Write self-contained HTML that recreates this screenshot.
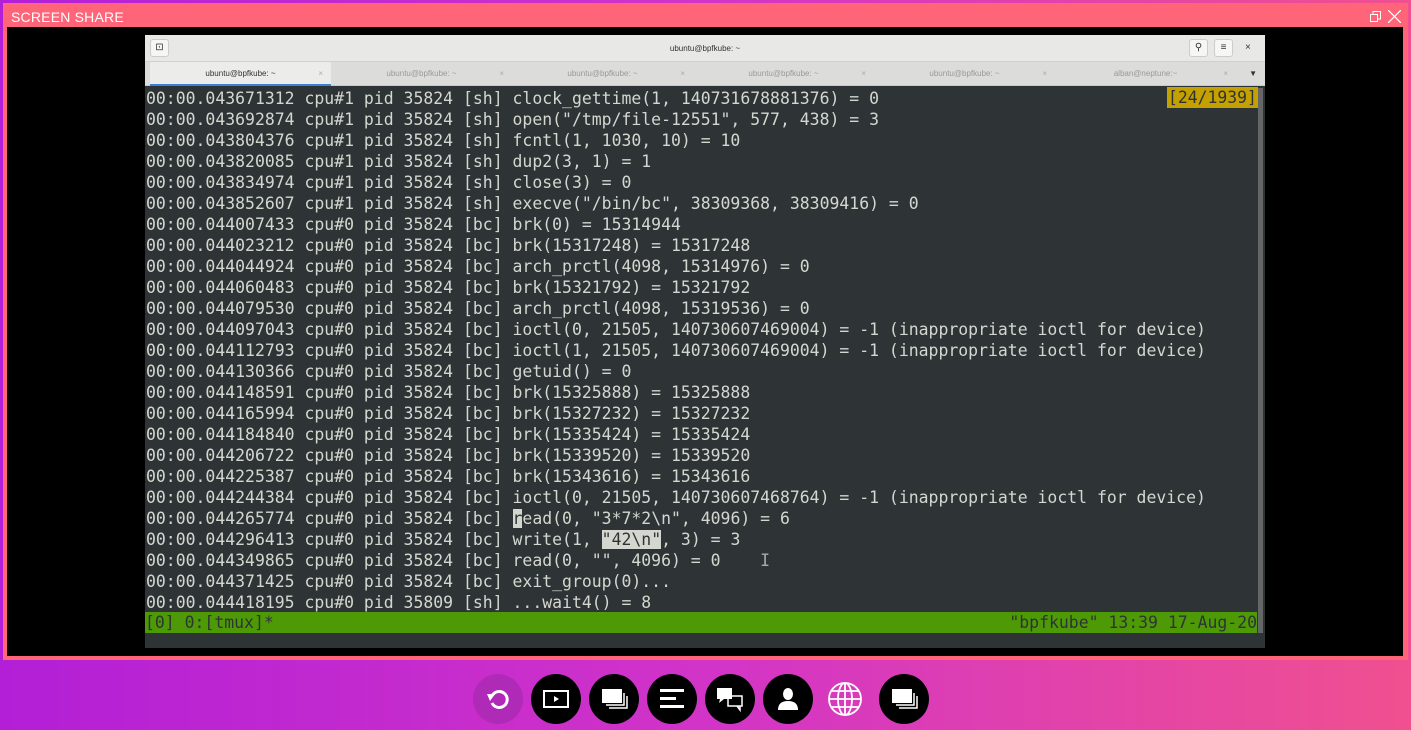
<!DOCTYPE html>
<html><head><meta charset="utf-8"><style>
*{margin:0;padding:0;box-sizing:border-box}
body{width:1411px;height:730px;overflow:hidden;background:linear-gradient(90deg,#b21fd6 0%,#d234c8 50%,#f0508f 100%);position:relative;font-family:"Liberation Sans",sans-serif}
.frame{position:absolute;left:3px;top:3px;width:1405px;height:657px;background:#ff6478}
.title{position:absolute;left:8px;top:6px;color:#fff;font-size:14px;letter-spacing:.2px}
.black{position:absolute;left:7px;top:27px;width:1396px;height:629px;background:#000}
.win{position:absolute;left:145px;top:35px;width:1120px;height:613px;background:#2e3436}
.hdr{position:absolute;left:0;top:0;width:100%;height:27px;background:#e8e8e7;border-bottom:1px solid #d0d0d0}
.tabs{position:absolute;left:0;top:27px;width:100%;height:24px;background:#dcdcdb;border-bottom:1px solid #c8c8c8}
.tab{position:absolute;top:0;height:24px;width:181px;font-size:8px;color:#999;text-align:center;line-height:24px}
.tab.a{background:#ececeb;color:#333;border-bottom:2px solid #3c7fd6}
.tab span{position:absolute;right:8px;color:#aaa}
.btn{position:absolute;top:4px;width:19px;height:18px;background:#f6f6f5;border:1px solid #ccc;border-radius:3px;font-size:10px;text-align:center;line-height:16px;color:#333}
.term{position:absolute;left:1px;top:53px;font-family:"DejaVu Sans Mono",monospace;font-size:16.47px;line-height:21px;color:#d3d7cf;white-space:pre}
.status{position:absolute;left:0;top:577px;width:1112px;height:21px;background:#4e9a06;font-family:"DejaVu Sans Mono",monospace;font-size:16.47px;line-height:21px;color:#2e3436;white-space:pre}
.sb{position:absolute;right:2px;top:53px;width:5px;height:545px;background:#888;opacity:.6}
.ctl{position:absolute;width:50px;height:50px;border-radius:50%;background:#000;top:674px}
</style></head><body>
<div class="frame"><div class="title">SCREEN SHARE</div>
<svg style="position:absolute;right:27px;top:8px" width="11" height="11"><rect x="0.5" y="3.5" width="7" height="7" fill="none" stroke="#fff"/><path d="M3 3V0.5H10.5V8H8" fill="none" stroke="#fff"/></svg>
<svg style="position:absolute;right:7px;top:7px" width="13" height="13"><path d="M0 0L13 13M13 0L0 13" stroke="#fff" stroke-width="1.2"/></svg>
</div>
<div class="black"></div>
<div class="win">
<div class="hdr"><div class="btn" style="left:5px">⊡</div><div style="position:absolute;left:0;width:100%;text-align:center;font-size:8px;line-height:27px;color:#333">ubuntu@bpfkube: ~</div>
<div class="btn" style="left:1044px">⚲</div><div class="btn" style="left:1069px">≡</div><div style="position:absolute;left:1100px;top:7px;font-size:10px;color:#333">×</div></div>
<div class="tabs">
<div class="tab a" style="left:5px">ubuntu@bpfkube: ~<span>×</span></div>
<div class="tab" style="left:186px">ubuntu@bpfkube: ~<span>×</span></div>
<div class="tab" style="left:367px">ubuntu@bpfkube: ~<span>×</span></div>
<div class="tab" style="left:548px">ubuntu@bpfkube: ~<span>×</span></div>
<div class="tab" style="left:729px">ubuntu@bpfkube: ~<span>×</span></div>
<div class="tab" style="left:910px">alban@neptune:~<span>×</span></div>
<div style="position:absolute;right:8px;top:0;font-size:8px;line-height:24px;color:#333">▼</div>
</div>
<div class="term">00:00.043671312 cpu#1 pid 35824 [sh] clock_gettime(1, 140731678881376) = 0
00:00.043692874 cpu#1 pid 35824 [sh] open("/tmp/file-12551", 577, 438) = 3
00:00.043804376 cpu#1 pid 35824 [sh] fcntl(1, 1030, 10) = 10
00:00.043820085 cpu#1 pid 35824 [sh] dup2(3, 1) = 1
00:00.043834974 cpu#1 pid 35824 [sh] close(3) = 0
00:00.043852607 cpu#1 pid 35824 [sh] execve("/bin/bc", 38309368, 38309416) = 0
00:00.044007433 cpu#0 pid 35824 [bc] brk(0) = 15314944
00:00.044023212 cpu#0 pid 35824 [bc] brk(15317248) = 15317248
00:00.044044924 cpu#0 pid 35824 [bc] arch_prctl(4098, 15314976) = 0
00:00.044060483 cpu#0 pid 35824 [bc] brk(15321792) = 15321792
00:00.044079530 cpu#0 pid 35824 [bc] arch_prctl(4098, 15319536) = 0
00:00.044097043 cpu#0 pid 35824 [bc] ioctl(0, 21505, 140730607469004) = -1 (inappropriate ioctl for device)
00:00.044112793 cpu#0 pid 35824 [bc] ioctl(1, 21505, 140730607469004) = -1 (inappropriate ioctl for device)
00:00.044130366 cpu#0 pid 35824 [bc] getuid() = 0
00:00.044148591 cpu#0 pid 35824 [bc] brk(15325888) = 15325888
00:00.044165994 cpu#0 pid 35824 [bc] brk(15327232) = 15327232
00:00.044184840 cpu#0 pid 35824 [bc] brk(15335424) = 15335424
00:00.044206722 cpu#0 pid 35824 [bc] brk(15339520) = 15339520
00:00.044225387 cpu#0 pid 35824 [bc] brk(15343616) = 15343616
00:00.044244384 cpu#0 pid 35824 [bc] ioctl(0, 21505, 140730607468764) = -1 (inappropriate ioctl for device)
00:00.044265774 cpu#0 pid 35824 [bc] <span style="background:#d3d7cf;color:#2e3436">r</span>ead(0, "3*7*2\n", 4096) = 6
00:00.044296413 cpu#0 pid 35824 [bc] write(1, <span style="background:#d3d7cf;color:#2e3436">"42\n"</span>, 3) = 3
00:00.044349865 cpu#0 pid 35824 [bc] read(0, "", 4096) = 0    <span style="color:#aaa">I</span>
00:00.044371425 cpu#0 pid 35824 [bc] exit_group(0)...
00:00.044418195 cpu#0 pid 35809 [sh] ...wait4() = 8</div>
<div style="position:absolute;left:1022px;top:52px;height:21px;background:#c4a000;color:#2e3436;font-family:'DejaVu Sans Mono',monospace;font-size:16.4px;line-height:21px;padding:0 1px">[24/1939]</div>
<div class="sb"></div>
<div class="status">[0] 0:[tmux]*<span style="position:absolute;right:0">"bpfkube" 13:39 17-Aug-20</span></div>
</div>
<div class="ctl" style="left:473px;background:rgba(160,40,170,.6)"><svg width="50" height="50"><path d="M19 22 A8 8 0 1 1 19 29" fill="none" stroke="#fff" stroke-width="3"/><path d="M14 20 L22 20 L17 27Z" fill="#fff"/></svg></div>
<div class="ctl" style="left:531px"><svg width="50" height="50"><rect x="13" y="17" width="24" height="16" fill="none" stroke="#fff" stroke-width="2"/><path d="M23 22L28 25L23 28Z" fill="#fff"/></svg></div>
<div class="ctl" style="left:589px"><svg width="50" height="50"><rect x="13" y="15" width="20" height="14" fill="#fff"/><path d="M35 19V31H17M38 22V34H20" fill="none" stroke="#fff" stroke-width="1.5"/></svg></div>
<div class="ctl" style="left:647px"><svg width="50" height="50"><rect x="13" y="15" width="24" height="3" fill="#fff"/><rect x="13" y="23" width="16" height="3" fill="#fff"/><rect x="13" y="31" width="24" height="3" fill="#fff"/></svg></div>
<div class="ctl" style="left:705px"><svg width="50" height="50"><rect x="12" y="14" width="15" height="11" fill="#fff"/><path d="M15 25L14 29L19 25Z" fill="#fff"/><rect x="23" y="22" width="14" height="10" fill="none" stroke="#fff" stroke-width="1.5"/><path d="M32 32L35 36V32" fill="none" stroke="#fff" stroke-width="1.5"/></svg></div>
<div class="ctl" style="left:763px"><svg width="50" height="50"><ellipse cx="25" cy="20" rx="5" ry="6" fill="#fff"/><path d="M15 36Q15 27 25 27Q35 27 35 36Z" fill="#fff"/></svg></div>
<div style="position:absolute;left:821px;top:674px;width:50px;height:50px"><svg width="50" height="50"><g fill="none" stroke="#fff" stroke-width="1.8"><circle cx="24" cy="25" r="16"/><ellipse cx="24" cy="25" rx="7" ry="16"/><line x1="24" y1="9" x2="24" y2="41"/><line x1="8" y1="25" x2="40" y2="25"/><path d="M11 17H37M11 33H37"/></g></svg></div>
<div class="ctl" style="left:879px"><svg width="50" height="50"><rect x="13" y="15" width="20" height="14" fill="#fff"/><path d="M35 19V31H17M38 22V34H20" fill="none" stroke="#fff" stroke-width="1.5"/></svg></div>
</body></html>
